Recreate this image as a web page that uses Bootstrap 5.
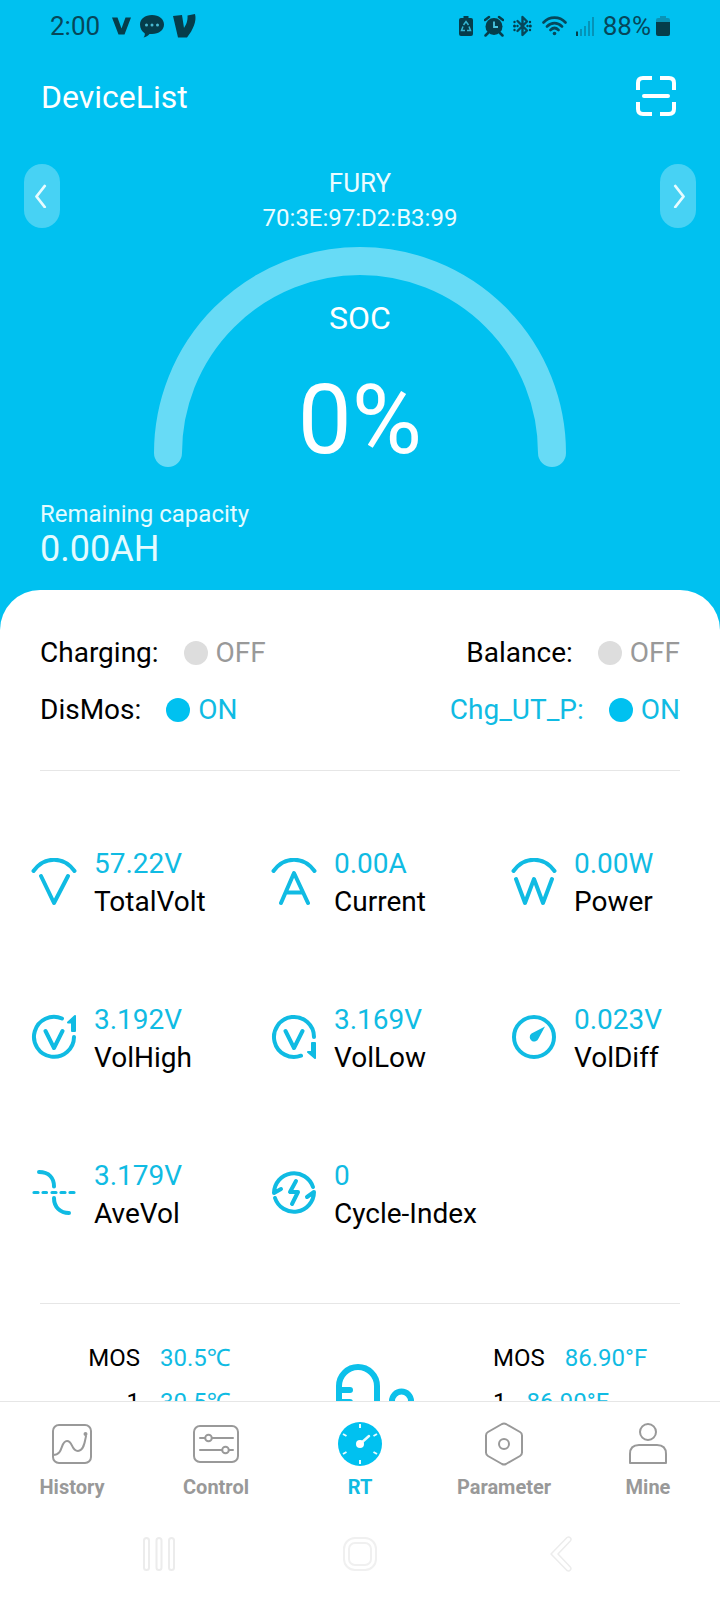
<!DOCTYPE html>
<html lang="en">
<head>
<meta charset="utf-8">
<meta name="viewport" content="width=device-width, initial-scale=1">
<title>DeviceList</title>
<link href="https://cdn.jsdelivr.net/npm/bootstrap@5.3.0/dist/css/bootstrap.min.css" rel="stylesheet">
<style>
  :root { --brand: #00c1f0; --brand-ink: #10bbe3; --ink-status: #06475a; --muted: #999; --line: #e6e6e6; }
  body { font-family: Roboto, "Noto Sans", sans-serif; color: #000; background: #fff; }
  svg { display: block; flex: none; }
  .screen { height: 100vh; }
  .content { min-height: 0; background: var(--brand); }
  .brand-ink { color: var(--brand-ink); }
  .statusbar { height: 52px; padding: 0 50px; font-size: 26px; color: var(--ink-status); }
  .statusbar .left-icons { gap: 9px; margin-left: 12px; }
  .statusbar .right-icons { gap: 9px; }
  .statusbar .charge { gap: 5px; }
  .titlebar { height: 88px; padding: 0 44px 0 41px; }
  .titlebar h1 { font-size: 32px; line-height: 40px; font-weight: 400; padding-top: 2px; }
  .switcher { padding: 24px 24px 0; }
  .switcher button { width: 36px; height: 64px; border-radius: 18px; background: rgba(255,255,255,.28); color: #e8fcff; }
  .device { padding-top: 2px; font-size: 24px; line-height: 35px; color: #ecfcff; }
  .device h2 { font-size: 26px; line-height: 35px; font-weight: 400; }
  .gauge { display: grid; justify-content: center; margin-top: 11px; }
  .gauge > * { grid-area: 1 / 1; }
  .gauge-text { gap: 35px; }
  .soc { font-size: 32px; line-height: 40px; }
  .percent { font-size: 96px; line-height: 94px; }
  .capacity { padding: 31px 40px 22px; font-size: 24px; line-height: 32px; color: #e4fbff; }
  .capacity strong { font-size: 36px; line-height: 38px; font-weight: 400; }
  .sheet { border-radius: 40px 40px 0 0; padding-top: 45px; }
  .states { padding: 0 40px 42px; gap: 21px; font-size: 28px; line-height: 36px; }
  .state { gap: 25px; }
  .state span { gap: 8px; }
  .state i { width: 24px; height: 24px; border-radius: 50%; background: var(--brand); }
  .is-off { color: var(--muted); }
  .is-off i { background: #ddd; }
  .rule { height: 1px; margin: 0 40px; background: var(--line); }
  .metrics { margin: 33px 0 31px; }
  .metric { height: 156px; padding-left: 30px; gap: 16px; font-size: 28px; line-height: 38px; }
  .metric dl { margin: 0; padding-top: 2px; white-space: nowrap; }
  .metric dt { font-weight: 400; }
  .temps { padding: 32px 40px 0; font-size: 24px; line-height: 44px; }
  .temps-c, .temps-f { flex: 1 1 0; }
  .temp { gap: 20px; }
  .temps-c .tag { width: 100px; text-align: right; }
  .temps-f .temp { padding-left: 79px; }
  .probe { color: #0cc0ea; }
  .tabs { border-top: 1px solid var(--line); padding: 18px 0 8px; }
  .tabs a { gap: 6px; font-size: 20px; line-height: 26px; font-weight: 700; color: var(--muted); }
  .tabs a.active { color: var(--brand-ink); }
  .sysnav { height: 92px; padding: 0 59px; }
  .stroke { fill: none; stroke: currentColor; stroke-linecap: round; stroke-linejoin: round; }
</style>
</head>
<body>
<div class="screen d-flex flex-column overflow-hidden">
  <main class="content flex-fill overflow-hidden">
    <div class="statusbar d-flex justify-content-between align-items-center">
      <div class="d-flex align-items-center">
        <span>2:00</span>
        <div class="left-icons d-flex align-items-center">
          <svg width="19" height="24" viewBox="0 0 19 24" fill="#053d4b"><path d="M0 3.500h5.500l4 11 4-11H19l-6.500 17h-6z"/></svg>
          <svg width="24" height="24" viewBox="0 0 24 24"><path fill="#053d4b" d="M12 1c7 0 12 4 12 9.500S19 20 12 20H9.500c-1.500 2-3.500 3-6 3.500 1.200-1.300 1.500-2.700 1.200-4.300C2 17.500 0 14.500 0 10.500 0 5 5 1 12 1z"/><g fill="#49b9d0"><circle cx="6.500" cy="11" r="1.500"/><circle cx="12" cy="11" r="1.500"/><circle cx="17.500" cy="11" r="1.500"/></g></svg>
          <svg width="24" height="24" viewBox="0 0 24 24"><path fill="#053d4b" d="M0 2 9 1l2 13c2-3 4-7 3.500-12.500L22 0c2 7-2 16-8 23.500H5z"/></svg>
        </div>
      </div>
      <div class="right-icons d-flex align-items-center">
        <svg width="16" height="22" viewBox="0 0 16 22"><path fill="#053d4b" d="M4.500 1h5v2H12q2 0 2 2v14q0 2-2 2H2q-2 0-2-2V5q0-2 2-2h2.500z"/><g fill="none" stroke="#35b4d0" stroke-width="1.500"><path d="m4.500 10 2.500-3.500L9.500 10M4 11.500 2.500 15.500H6M10 11.500l1.500 4H8"/></g></svg>
        <svg width="20" height="22" viewBox="0 0 20 22"><circle cx="10" cy="11.500" r="8.500" fill="#053d4b"/><path d="m1 5 4-3M19 5l-4-3M4 18l-2.500 2.500M16 18l2.500 2.500" stroke="#053d4b" stroke-width="2.500" stroke-linecap="round"/><path d="M10 6.500V12h4" fill="none" stroke="#49c5e0" stroke-width="1.800"/></svg>
        <svg width="20" height="22" viewBox="0 0 20 22"><g class="stroke" stroke-width="2.400"><path d="m4.500 6 9.500 9.500L9.500 20V2L14 6.500 4.500 16"/></g><g fill="#053d4b"><circle cx="1.500" cy="7" r="1.200"/><circle cx="1.500" cy="11" r="1.500"/><circle cx="1.500" cy="15" r="1.200"/><circle cx="4.500" cy="11" r="1.200"/><circle cx="14.500" cy="11" r="1.200"/><circle cx="17.300" cy="11" r="1.500"/><circle cx="17" cy="7" r="1.200"/><circle cx="17" cy="15" r="1.200"/></g></svg>
        <svg width="25" height="22" viewBox="0 0 25 22"><g class="stroke" stroke-width="2.600"><path d="M1.500 7.500c6-6.500 16-6.500 22 0M5 11.500c4.500-4.500 10.500-4.500 15 0M8.500 15c2.500-2.500 5.500-2.500 8 0"/></g><circle cx="12.500" cy="18.500" r="1.800" fill="currentColor"/></svg>
        <svg width="18" height="22" viewBox="0 0 18 22"><path fill="#053d4b" d="M0 16.500h2V21H0z"/><path fill="#0593b8" d="M4 14h2v7H4zM8 11h2v10H8zM12 6h2v15h-2zM16 2h2v19h-2z"/></svg>
        <div class="charge d-flex align-items-center">
          <span>88%</span>
          <svg width="14" height="22" viewBox="0 0 14 22"><path fill="#0a93b6" d="M4 1h6v2h2q2 0 2 2v3H0V5q0-2 2-2h2z"/><path fill="#053d4b" d="M0 7h14v12q0 2-2 2H2q-2 0-2-2z"/></svg>
        </div>
      </div>
    </div>

    <header class="titlebar d-flex justify-content-between align-items-center text-white">
      <h1 class="m-0">DeviceList</h1>
      <button class="btn p-0 border-0 text-white" type="button" aria-label="Scan">
        <svg width="40" height="40" viewBox="0 0 40 40" class="stroke" stroke-width="4"><path stroke-linecap="butt" d="M2 14V7q0-5 5-5h9M24 2h9q5 0 5 5v7M38 26v7q0 5-5 5h-9M16 38H7q-5 0-5-5v-7"/><path d="M8 20h24"/></svg>
      </button>
    </header>

    <section class="text-white">
      <div class="switcher d-flex justify-content-between align-items-start">
        <button class="btn p-0 border-0 d-flex align-items-center justify-content-center" type="button" aria-label="Previous device"><svg width="14" height="24" viewBox="0 0 14 24" class="stroke" stroke-width="2.800"><path d="M9.700 2 1.500 12.500 9.700 23"/></svg></button>
        <div class="device text-center">
          <h2 class="m-0">FURY</h2>
          <div>70:3E:97:D2:B3:99</div>
        </div>
        <button class="btn p-0 border-0 d-flex align-items-center justify-content-center" type="button" aria-label="Next device"><svg width="14" height="24" viewBox="0 0 14 24" class="stroke" stroke-width="2.800"><path d="m4.300 2 8.200 10.500L4.300 23"/></svg></button>
      </div>
      <div class="gauge">
        <svg width="412" height="220" viewBox="0 0 412 220"><path d="M14 206a192 192 0 0 1 384 0" fill="none" stroke="#67dbf6" stroke-width="28" stroke-linecap="round"/></svg>
        <div class="gauge-text d-flex flex-column justify-content-end text-center">
          <div class="soc">SOC</div>
          <div class="percent">0%</div>
        </div>
      </div>
      <div class="capacity">
        <div>Remaining capacity</div>
        <strong class="d-block">0.00AH</strong>
      </div>
    </section>

    <section class="sheet bg-white">
      <div class="states d-flex flex-column">
        <div class="d-flex justify-content-between">
          <div class="state d-flex">Charging:<span class="is-off d-flex align-items-center"><i></i>OFF</span></div>
          <div class="state d-flex">Balance:<span class="is-off d-flex align-items-center"><i></i>OFF</span></div>
        </div>
        <div class="d-flex justify-content-between">
          <div class="state d-flex">DisMos:<span class="brand-ink d-flex align-items-center"><i></i>ON</span></div>
          <div class="state d-flex brand-ink">Chg_UT_P:<span class="d-flex align-items-center"><i></i>ON</span></div>
        </div>
      </div>
      <div class="rule"></div>

      <div class="metrics row g-0 row-cols-3">
        <div class="col metric d-flex align-items-center">
          <svg class="stroke brand-ink" width="48" height="48" viewBox="0 0 48 48" stroke-width="4"><path d="M3.500 13c11-15 30-15 41 0M11 18l13 27 14-27"/></svg>
          <dl><dd class="m-0 brand-ink">57.22V</dd><dt>TotalVolt</dt></dl>
        </div>
        <div class="col metric d-flex align-items-center">
          <svg class="stroke brand-ink" width="48" height="48" viewBox="0 0 48 48" stroke-width="4"><path d="M3.500 13c11-15 30-15 41 0M11 45l13-30 14 30M16 34.500h17"/></svg>
          <dl><dd class="m-0 brand-ink">0.00A</dd><dt>Current</dt></dl>
        </div>
        <div class="col metric d-flex align-items-center">
          <svg class="stroke brand-ink" width="48" height="48" viewBox="0 0 48 48" stroke-width="4"><path d="M3.500 13c11-15 30-15 41 0M6 21l9 24 9-24 9 24 9-24"/></svg>
          <dl><dd class="m-0 brand-ink">0.00W</dd><dt>Power</dt></dl>
        </div>
        <div class="col metric d-flex align-items-center">
          <svg class="stroke brand-ink" width="48" height="48" viewBox="0 0 48 48" stroke-width="4"><path d="M32 4.500A20 20 0 1 0 44 23M15.500 17 24 34l8.500-17"/><path fill="currentColor" stroke-width="2" d="m38 8.500 7-6.500v15h-3V8.500z"/></svg>
          <dl><dd class="m-0 brand-ink">3.192V</dd><dt>VolHigh</dt></dl>
        </div>
        <div class="col metric d-flex align-items-center">
          <svg class="stroke brand-ink" width="48" height="48" viewBox="0 0 48 48" stroke-width="4"><path d="M44 23a20 20 0 1 0-13 18.700M15.500 17 24 34l8.500-17"/><path fill="currentColor" stroke-width="2" d="m38 38 7 6V29h-3v9z"/></svg>
          <dl><dd class="m-0 brand-ink">3.169V</dd><dt>VolLow</dt></dl>
        </div>
        <div class="col metric d-flex align-items-center">
          <svg class="stroke brand-ink" width="48" height="48" viewBox="0 0 48 48" stroke-width="4"><circle cx="24" cy="23" r="20"/><path fill="currentColor" stroke="none" d="M35 12.500 28.500 24.500a4.500 4.500 0 1 1-7-5z"/></svg>
          <dl><dd class="m-0 brand-ink">0.023V</dd><dt>VolDiff</dt></dl>
        </div>
        <div class="col metric d-flex align-items-center">
          <svg class="stroke brand-ink" width="48" height="48" viewBox="0 0 48 48" stroke-width="4"><path d="M9 2c10 0 15 6 15 14.500M24 28c0 9 6 15 15 15"/><path stroke-width="3.200" d="M4 22.500h4M13 22.500h3.500M22 22.500h4M31 22.500h4M40 22.500h4"/></svg>
          <dl><dd class="m-0 brand-ink">3.179V</dd><dt>AveVol</dt></dl>
        </div>
        <div class="col metric d-flex align-items-center">
          <svg class="stroke brand-ink" width="48" height="48" viewBox="0 0 48 48" stroke-width="4"><path d="M43 17A20 20 0 0 0 4 23l7-4M5 28a20 20 0 0 0 39-6l-7 5"/><path d="m26 11-6 11h8l-6 12"/></svg>
          <dl><dd class="m-0 brand-ink">0</dd><dt>Cycle-Index</dt></dl>
        </div>
      </div>
      <div class="rule"></div>

      <div class="temps d-flex align-items-start">
        <div class="temps-c">
          <div class="temp d-flex"><span class="tag">MOS</span><span class="brand-ink">30.5℃</span></div>
          <div class="temp d-flex"><span class="tag">1</span><span class="brand-ink">30.5℃</span></div>
        </div>
        <svg class="stroke probe" width="108" height="110" viewBox="0 0 108 110" stroke-width="6"><path d="M33 90V50a19 19 0 0 1 38 0v40M36 54h8M36 66h8M86 90V65a9.500 9.500 0 0 1 19 0v25"/></svg>
        <div class="temps-f">
          <div class="temp d-flex"><span>MOS</span><span class="brand-ink">86.90°F</span></div>
          <div class="temp d-flex"><span>1</span><span class="brand-ink">86.90°F</span></div>
        </div>
      </div>
    </section>
  </main>

  <nav class="tabs bg-white flex-shrink-0 row g-0 row-cols-5">
    <a class="col d-flex flex-column align-items-center text-decoration-none" href="#history">
      <svg class="stroke" width="48" height="48" viewBox="0 0 48 48" stroke-width="2"><rect x="5" y="5" width="38" height="38" rx="6"/><path d="M5 35c11 0 7-14 14-14 6 0 4 10 11 10 6 0 7-10 8-15"/><circle cx="37.500" cy="14" r="1"/></svg>
      History</a>
    <a class="col d-flex flex-column align-items-center text-decoration-none" href="#control">
      <svg class="stroke" width="48" height="48" viewBox="0 0 48 48" stroke-width="2"><rect x="2" y="6" width="44" height="36" rx="6"/><path d="M8 18h5M20 18h21M8 30h22M37 30h4"/><circle cx="16.500" cy="18" r="3.300"/><circle cx="33.500" cy="30" r="3.300"/></svg>
      Control</a>
    <a class="active col d-flex flex-column align-items-center text-decoration-none" href="#rt" aria-current="page">
      <svg width="48" height="48" viewBox="0 0 48 48"><circle cx="24" cy="24" r="22" fill="#00c1f0"/><g stroke="#e8fbff" stroke-width="2"><path d="M24 4v4M24 40v4M7 14l3.500 2M41 14l-3.500 2M7 34l3.500-2M41 34l-3.500-2"/><path d="m24 24 9-8" stroke-width="2.500" stroke-linecap="round"/></g><circle cx="24" cy="24" r="4" fill="#fff"/></svg>
      RT</a>
    <a class="col d-flex flex-column align-items-center text-decoration-none" href="#parameter">
      <svg class="stroke" width="48" height="48" viewBox="0 0 48 48" stroke-width="2"><path d="M22 4q2-1 4 0l14 8q2 1.200 2 3.500v17q0 2.300-2 3.500l-14 8q-2 1-4 0L8 36q-2-1.200-2-3.500v-17Q6 13.200 8 12z"/><circle cx="24" cy="24" r="5"/></svg>
      Parameter</a>
    <a class="col d-flex flex-column align-items-center text-decoration-none" href="#mine">
      <svg class="stroke" width="48" height="48" viewBox="0 0 48 48" stroke-width="2"><circle cx="24" cy="12" r="8"/><path d="M6 43V34q0-9 9-9h18q9 0 9 9v9z"/></svg>
      Mine</a>
  </nav>

  <div class="sysnav bg-white flex-shrink-0 d-flex align-items-center">
    <button class="btn p-0 border-0 flex-fill w-100 d-flex justify-content-center" type="button" aria-label="Recent apps"><svg width="36" height="36" viewBox="0 0 36 36" fill="none" stroke="#ececec" stroke-width="2"><rect x="3" y="2" width="5" height="32" rx="2.500"/><rect x="15.500" y="2" width="5" height="32" rx="2.500"/><rect x="28" y="2" width="5" height="32" rx="2.500"/></svg></button>
    <button class="btn p-0 border-0 flex-fill w-100 d-flex justify-content-center" type="button" aria-label="Home"><svg width="36" height="36" viewBox="0 0 36 36" fill="none" stroke="#f0f0f0" stroke-width="2"><rect x="2" y="2" width="32" height="32" rx="11"/><rect x="7" y="7" width="22" height="22" rx="6"/></svg></button>
    <button class="btn p-0 border-0 flex-fill w-100 d-flex justify-content-center" type="button" aria-label="Back"><svg width="24" height="36" viewBox="0 0 24 36" fill="none" stroke="#ececec" stroke-width="1.500" stroke-linejoin="round"><path d="M18 1.500 2 18l16 16.500q2 1 3.300-.5t0-3L9 18 21.300 5q1.500-1.700 0-3.200T18 1.500z"/></svg></button>
  </div>
</div>
<script src="https://cdn.jsdelivr.net/npm/bootstrap@5.3.0/dist/js/bootstrap.bundle.min.js"></script>
</body>
</html>
